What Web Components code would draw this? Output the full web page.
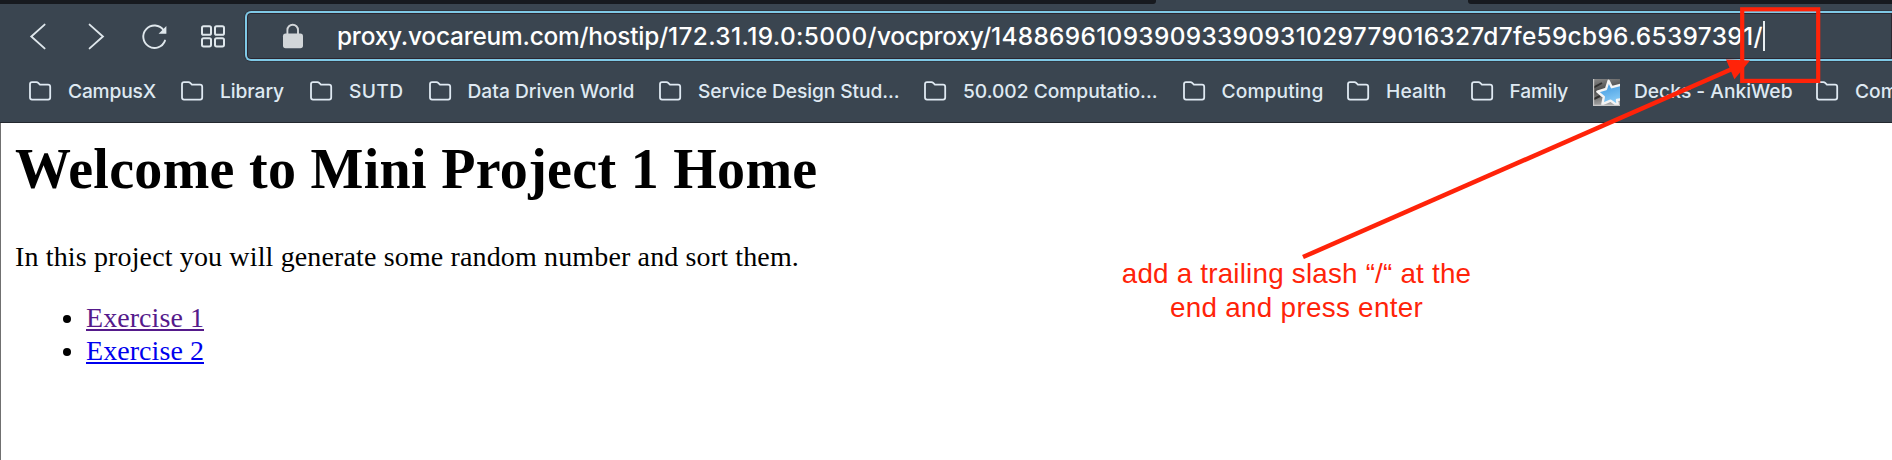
<!DOCTYPE html>
<html lang="en">
<head>
<meta charset="utf-8">
<title>Mini Project 1</title>
<style>
html,body{margin:0;height:460px;overflow:hidden;background:#fff}
</style>
</head>
<body>
<demo-window></demo-window>
<script>
const define = (name, markup, setup) => customElements.define(name, class extends HTMLElement {
  connectedCallback() {
    if (this.shadowRoot) return;
    const t = document.createElement('template');
    t.innerHTML = markup;
    this.attachShadow({mode: 'open'}).append(t.content.cloneNode(true));
    if (setup) setup(this, this.shadowRoot);
  }
});

// A single line of text tracked out (or in) to the advance width given in "w".
define('tracked-text', `<style>
:host{display:inline-block;white-space:nowrap;vertical-align:baseline}
:host([inline]){display:inline}
</style><slot></slot>`, el => {
  const w = parseFloat(el.getAttribute('w'));
  if (!w) return;
  const range = document.createRange();
  range.selectNodeContents(el);
  const natural = range.getBoundingClientRect().width;
  el.style.letterSpacing = ((w - natural) / el.textContent.length) + 'px';
});

define('nav-buttons', `<style>
:host{display:block;width:245px;height:50px;flex:none}
svg{display:block;fill:none;stroke:#dfe7ec;stroke-width:1.9;stroke-linecap:round}
</style>
<svg width="245" height="50" viewBox="0 11 245 50">
<path d="M44.6 24.6 31.3 36.5 44.6 48.4"/>
<path d="M89.6 24.6 102.9 36.5 89.6 48.4"/>
<path d="M163.6 30.2A11.2 11.2 0 1 0 165 40.6"/>
<path d="M166.4 26V33.8H158.6Z" fill="#dfe7ec" stroke="none"/>
<g stroke-width="2"><rect x="202" y="26.2" width="9" height="8.6" rx="1.6"/><rect x="215" y="26.2" width="9" height="8.6" rx="1.6"/>
<rect x="202" y="38.2" width="9" height="8.2" rx="1.6"/><rect x="215" y="38.2" width="9" height="8.2" rx="1.6"/></g>
</svg>`);

define('address-bar', `<style>
:host{display:flex;align-items:center;flex:1;height:50px;box-sizing:border-box;border:2px solid #7fc9e6;border-right:0;
border-radius:6px 0 0 6px;box-shadow:inset 0 0 0 1px #2b2630,0 0 0 1px #303640;background:#3a4550;color:#fff;
font:500 24.4px/46px Inter,"Liberation Sans",sans-serif;overflow:hidden}
svg{margin-left:35px;flex:none}
.url{margin-left:33px;flex:none;white-space:nowrap}
i{width:2px;height:30px;background:#e8eef2;flex:none}
</style>
<svg width="22" height="26" viewBox="0 0 22 26"><rect x="1" y="10.6" width="20" height="14.6" rx="2.6" fill="#d2d6d9"/><path d="M5.4 12V7a5.3 5.3 0 0 1 10.6 0v5" fill="none" stroke="#d2d6d9" stroke-width="1.9"/></svg>
<span class="url"><slot></slot></span><i></i>`);

define('book-mark', `<style>
:host{display:flex;align-items:center;flex:none;height:30px;box-sizing:border-box}
.icon{width:39px;flex:none;display:flex}
:host([kind=anki]) .icon{width:41px}
:host([kind=anki]) .folder,:host(:not([kind=anki])) .star{display:none}
.star{margin-top:2px}
</style>
<span class="icon"><svg class="folder" width="23" height="20" viewBox="0 0 23 20"><path d="M1 16.6V3.3Q1 1.2 3 1.2H7.4Q8.5 1.2 9.2 1.9L10.9 3.6H19Q21.2 3.6 21.2 5.7V16.6Q21.2 18.6 19.2 18.6H3Q1 18.6 1 16.6Z" fill="none" stroke="#dfe9f2" stroke-width="1.8"/></svg>
<svg class="star" width="27" height="27" viewBox="0 0 27 27"><defs><linearGradient id="sky" x1="0" y1="0" x2=".3" y2="1"><stop offset="0" stop-color="#318fdc"/><stop offset="1" stop-color="#8bcdf7"/></linearGradient><linearGradient id="ash" x1="0" y1="0" x2=".2" y2="1"><stop offset="0" stop-color="#8a8a8a"/><stop offset=".45" stop-color="#4c4c4c"/><stop offset="1" stop-color="#a8a8a8"/></linearGradient><clipPath id="tile"><rect width="27" height="27"/></clipPath></defs>
<g clip-path="url(#tile)"><rect width="27" height="27" fill="url(#ash)"/><path d="M0 9 9 4M1 20 7 17" stroke="#303030" stroke-width="2"/>
<path d="M15.6 1.8 18.8 8.2 29 5.6V20.2L24 21 25 27 17.6 21.6 9.4 25.2 10.8 18 4.4 12.6 13 10Z" fill="url(#sky)" stroke="#f4f4f4" stroke-width="2.4" stroke-linejoin="round"/>
<path d="M.6 0V26.4H27" stroke="#c8c8c8" stroke-width="1.2" fill="none"/></g></svg></span>
<slot></slot>`);

define('bookmark-bar', `<style>
:host{display:flex;height:34px;padding-left:29px;align-items:center;color:#dfe9f2;
font:500 19.2px/30px Inter,"Liberation Sans",sans-serif;overflow:hidden}
</style><slot></slot>`);

define('browser-chrome', `<style>
:host{display:flex;flex-direction:column;height:123px;box-sizing:border-box;background:#3a4550;border-bottom:1px solid #23282f;overflow:hidden}
.tabs{display:grid;grid-template-columns:1156px 312px 1fr;height:4px;flex:none}
.tabs b{background:#171a1f}.tabs b:first-child{border-radius:0 0 3px 0}.tabs b:last-child{border-radius:0 0 0 3px}
.row{display:flex;height:50px;margin-top:7px;flex:none}
.marks{margin-top:13px}
</style>
<div class="tabs"><b></b><span></span><b></b></div>
<div class="row"><slot name="tools"></slot></div>
<div class="marks"><slot></slot></div>`);

define('project-page', `<style>
:host{display:block;flex:1;border-left:1px solid #707070;padding:14px 14px 0;font:28px/32px "Liberation Serif","Times New Roman",serif;color:#000}
h1{font-size:56px;line-height:64px;margin:0;white-space:nowrap}
p{margin:40px 0 0}
ul{margin:29px 0 0;padding-left:71px;line-height:32.6px}
a{color:#00e;text-decoration:underline}
a.seen{color:#551a8b}
</style>
<h1><tracked-text w="802.5">Welcome to Mini Project 1 Home</tracked-text></h1>
<p><tracked-text w="784">In this project you will generate some random number and sort them.</tracked-text></p>
<ul><li><a class="seen" href="#1"><tracked-text inline w="118">Exercise 1</tracked-text></a></li><li><a href="#2"><tracked-text inline w="118">Exercise 2</tracked-text></a></li></ul>`);

// Red call-out drawn over the window.
define('call-out', `<style>
:host{position:absolute;inset:0;pointer-events:none;color:#ff2309}
svg{position:absolute;left:0;top:0}
div{position:absolute;left:1096.5px;top:257px;width:400px;text-align:center;font:27.8px/33.7px "Liberation Sans",Arial,sans-serif}
tracked-text{display:table;margin:0 auto}
</style>
<svg width="1892" height="460"><rect x="1742.2" y="9.3" width="76" height="71.6" fill="none" stroke="currentColor" stroke-width="4.2"/>
<path d="M1303 257 1732 69" stroke="currentColor" stroke-width="4.6"/><path d="M1726 59.4 1750 60.4 1734.4 79.3Z" fill="currentColor"/></svg>
<div><tracked-text w="349.5">add a trailing slash “/“ at the</tracked-text><tracked-text w="253">end and press enter</tracked-text></div>`);

const marks = [['CampusX',88,152],['Library',64,129],['SUTD',54.5,118.5],['Data Driven World',167,230.5],
 ['Service Design Stud...',201.5,265],['50.002 Computatio...',194.5,258.5],['Computing',102,164.5],
 ['Health',60.5,123.5],['Family',58.5,122.5],['Decks - AnkiWeb',158.5,223,'anki'],['Com',0,90]];
const url = [['proxy.vocareum.com/hostip/',331],['172.31.19.0:5000/',209],['vocproxy/',114],
 ['148869610939093390931029779016327d7fe59cb96',637],['.65397391/',134]];
define('demo-window', `<style>
:host{display:flex;flex-direction:column;position:relative;width:1892px;height:460px;overflow:hidden}
</style>
<browser-chrome>
<nav-buttons slot="tools"></nav-buttons>
<address-bar slot="tools">${url.map(([t,w]) => `<tracked-text inline w="${w}">${t}</tracked-text>`).join('')}</address-bar>
<bookmark-bar>${marks.map(([t,w,p,k]) => `<book-mark style="width:${p}px"${k ? ` kind="${k}"` : ''}><tracked-text w="${w}">${t}</tracked-text></book-mark>`).join('')}</bookmark-bar>
</browser-chrome>
<project-page></project-page>
<call-out></call-out>`);
</script>
</body>
</html>
